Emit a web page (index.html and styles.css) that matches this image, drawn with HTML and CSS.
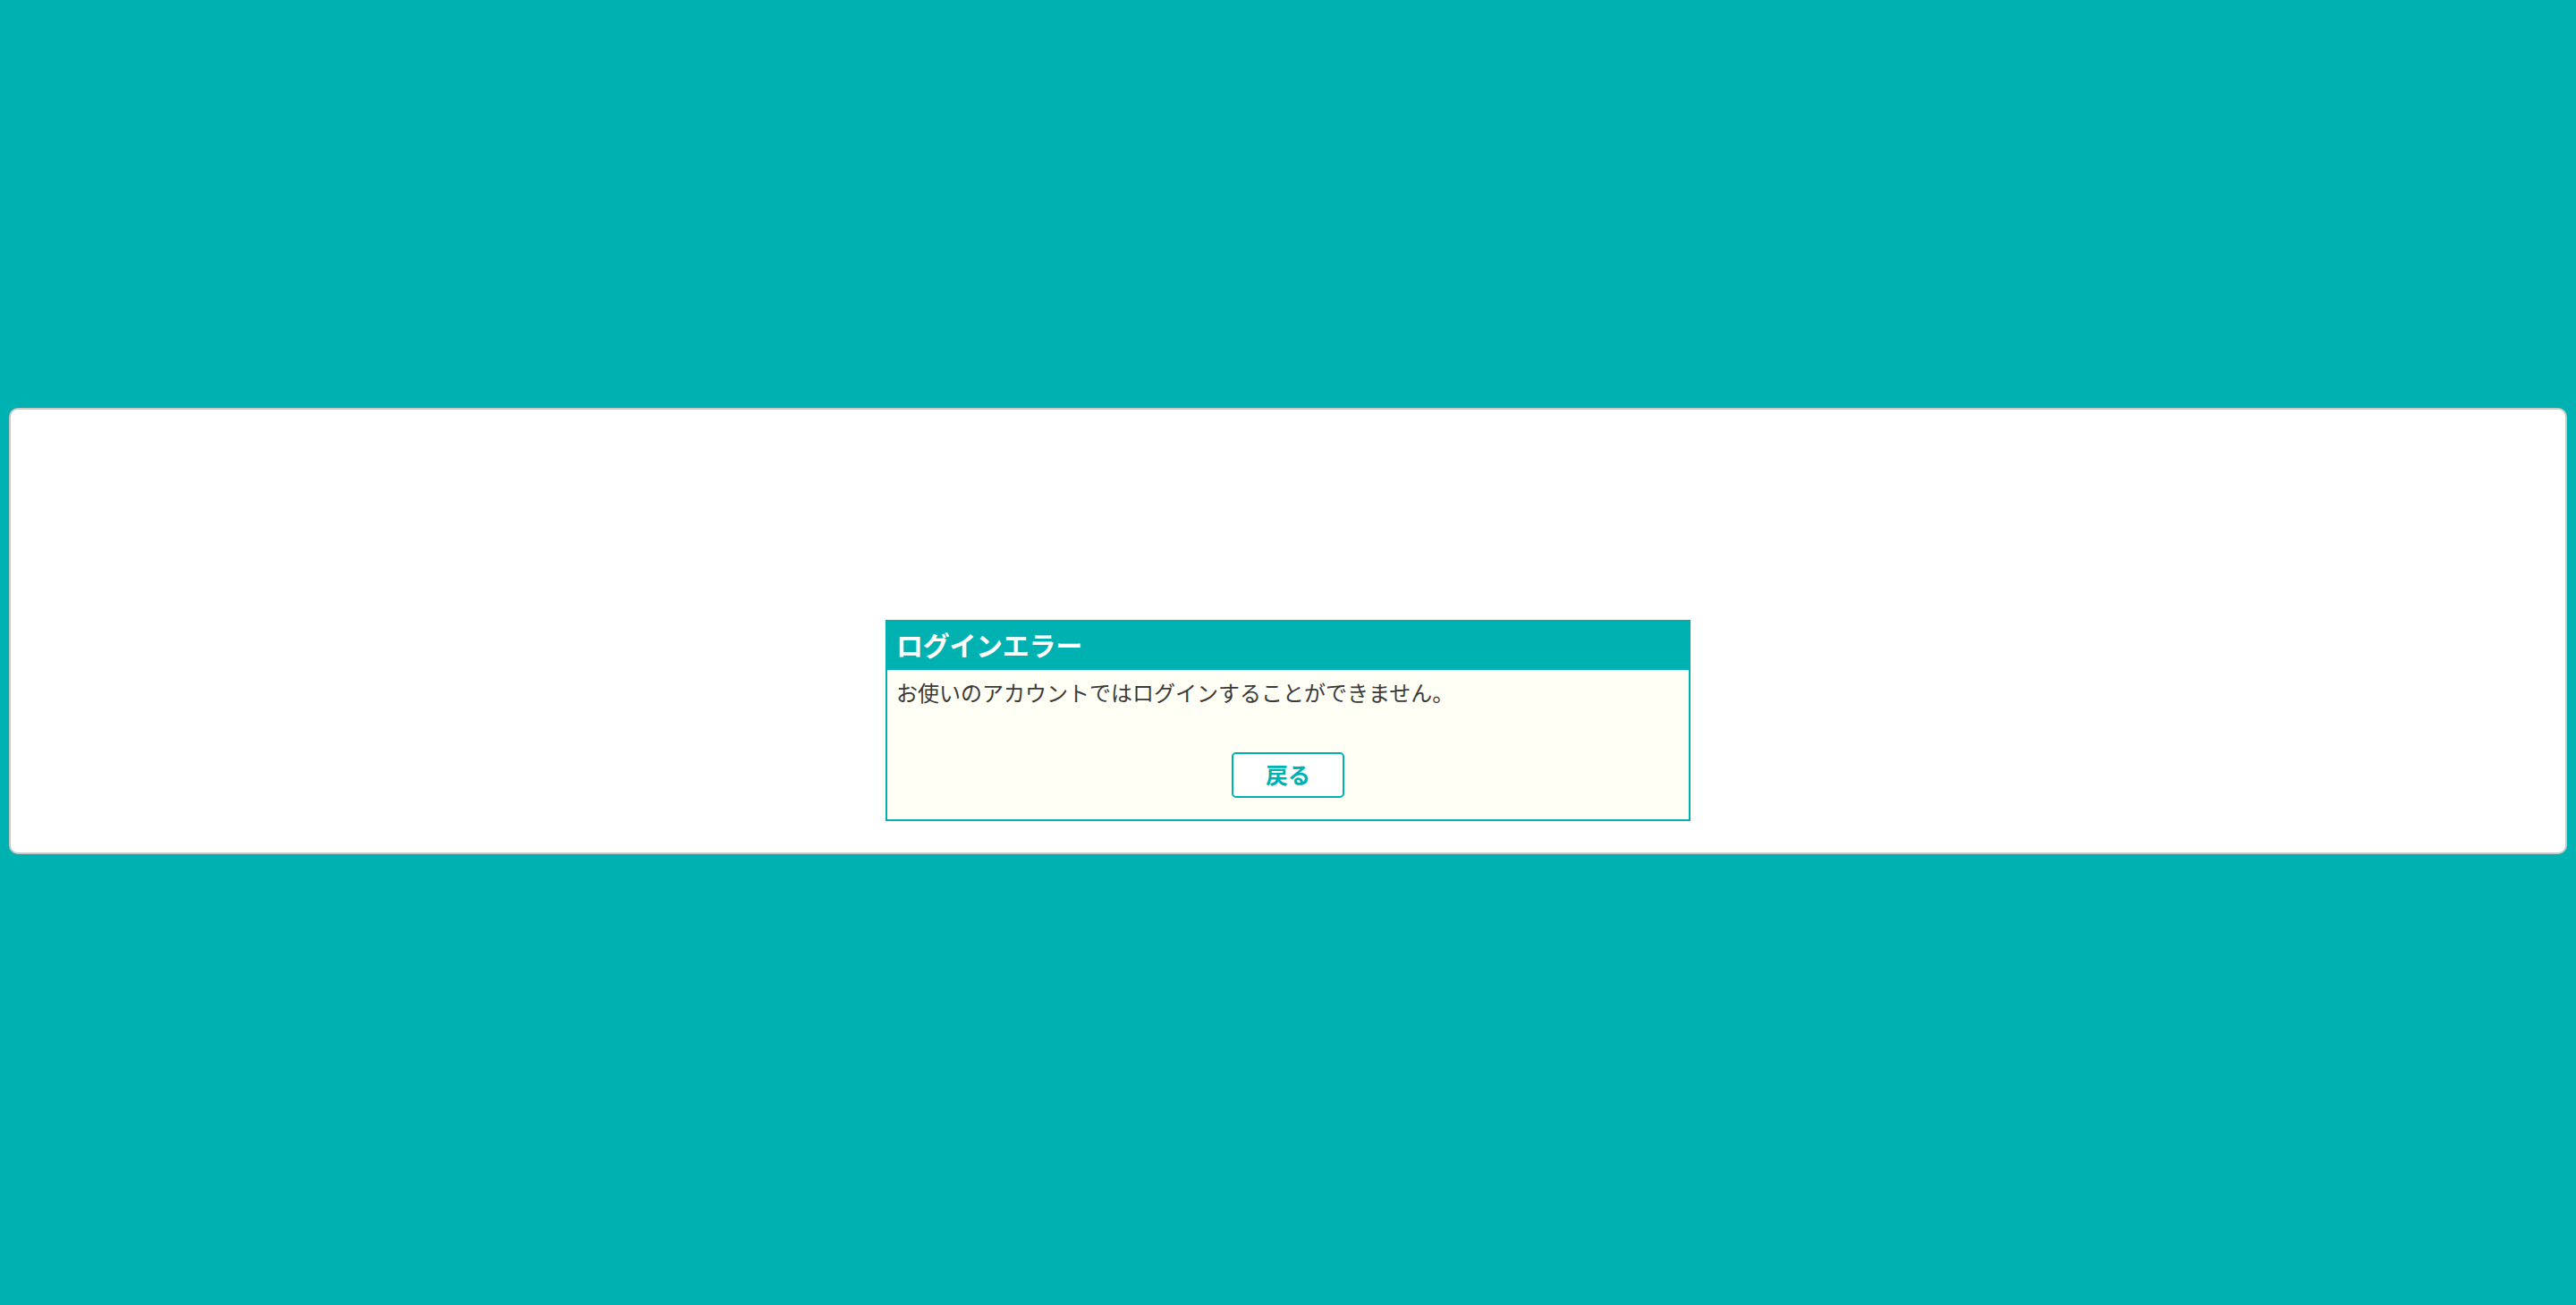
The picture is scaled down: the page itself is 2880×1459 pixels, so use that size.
FILE: index.html
```html
<!DOCTYPE html>
<html lang="ja">
<head>
<meta charset="utf-8">
<title>ログインエラー</title>
<link rel="stylesheet" href="styles.css">
</head>
<body>
<div class="page">
  <div class="card">
    <div class="dialog">
      <div class="dialog-head">ログインエラー</div>
      <div class="dialog-body">
        <p class="message">お使いのアカウントではログインすることができません。</p>
        <div class="actions">
          <button class="back-btn" type="button">戻る</button>
        </div>
      </div>
    </div>
  </div>
</div>
</body>
</html>
```

FILE: styles.css
```css
html, body {
  margin: 0;
  padding: 0;
  height: 100%;
}
body {
  background: #00b1b2;
  font-family: "Noto Sans CJK JP", "Noto Sans", sans-serif;
  color: #333333;
}
.page {
  padding: 456px 10px 0;
}
.card {
  background: #ffffff;
  border: 2px solid #c9c9c9;
  border-radius: 10px;
  padding: 235px 0 35px;
}
.dialog {
  width: 896px;
  margin: 0 auto;
  border: 2px solid #00b1b2;
  background: #fffff6;
}
.dialog-head {
  background: #00b1b2;
  color: #ffffff;
  height: 54px;
  line-height: 51px;
  padding: 0 10px;
  font-size: 30px;
  font-weight: bold;
  letter-spacing: -0.3px;
}
.dialog-body {
  padding: 8px 10px 24px;
}
.message {
  margin: 0;
  font-size: 24px;
  line-height: 34px;
  letter-spacing: 0;
  color: #3a3a3a;
}
.actions {
  margin-top: 50px;
  display: flex;
  justify-content: center;
}
.back-btn {
  width: 126px;
  height: 51px;
  border: 2px solid #00b1b2;
  border-radius: 5px;
  background: #ffffff;
  color: #00b1b2;
  font-family: "Noto Sans CJK JP", "Noto Sans", sans-serif;
  font-size: 25px;
  font-weight: bold;
  padding: 0 0 3px;
  line-height: 1;
}
```
